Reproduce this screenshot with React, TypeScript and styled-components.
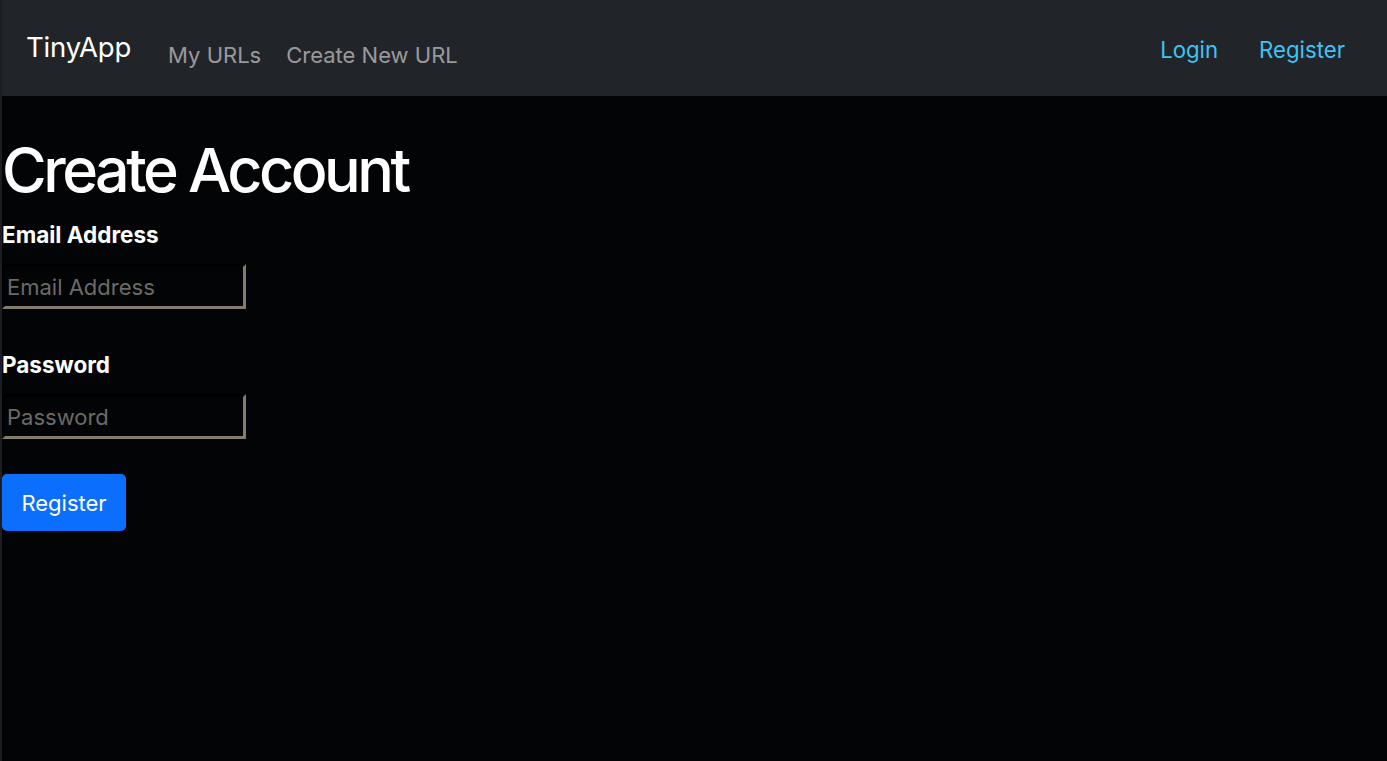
import React from "react";
import styled, { createGlobalStyle } from "styled-components";

const Global = createGlobalStyle`
  html, body { margin: 0; padding: 0; background: #030406; }
  body { font-family: Inter, "Noto Sans", sans-serif; color: #fff; }
  * { box-sizing: border-box; }
`;

const Page = styled.div`
  min-height: 761px;
  border-left: 2px solid #1c1e22;
  background: #030406;
`;

const Nav = styled.nav`
  height: 96px;
  background: #212529;
  display: flex;
  align-items: center;
  padding: 0 42px 0 24px;
`;

const Brand = styled.a`
  font-size: 27.5px;
  color: #fff;
  text-decoration: none;
  margin-right: 37px;
  margin-top: -2px;
  letter-spacing: -0.2px;
`;

const NavLinks = styled.div`
  display: flex;
  gap: 25px;
  margin-top: 14px;
`;

const NavLink = styled.a`
  font-size: 22px;
  color: rgba(255, 255, 255, 0.55);
  text-decoration: none;
`;

const Right = styled.div`
  margin-left: auto;
  display: flex;
  gap: 41px;
  margin-top: 2px;
`;

const AuthLink = styled.a`
  font-size: 22.2px;
  color: #3ec3f5;
  text-decoration: none;
`;

const Main = styled.main`
  padding: 38px 0 0 0;
`;

const Title = styled.h1`
  margin: 0 0 14px 0;
  font-size: 61px;
  font-weight: 500;
  line-height: 1.2;
  letter-spacing: -3.5px;
`;

const Form = styled.form`
  display: flex;
  flex-direction: column;
  align-items: flex-start;
`;

const Group = styled.div`
  display: flex;
  flex-direction: column;
  align-items: flex-start;
  margin-bottom: 42px;
`;

const Label = styled.label`
  font-size: 22.5px;
  font-weight: 700;
  margin-bottom: 16px;
`;

const Input = styled.input`
  width: 244px;
  height: 45px;
  background: #030406;
  border: 3px inset #857b6c;
  border-top-color: #3e3a34;
  border-left-color: #3e3a34;
  color: #fff;
  font-family: Inter, "Noto Sans", sans-serif;
  font-size: 22px;
  padding: 0 2px;
  outline: none;
  &::placeholder { color: #6d6a66; }
`;

const Button = styled.button`
  margin-top: -7px;
  width: 124px;
  height: 57px;
  background: #0b6efd;
  border: none;
  border-radius: 5px;
  color: #fff;
  font-family: Inter, "Noto Sans", sans-serif;
  font-size: 22px;
`;

export default function App() {
  return (
    <>
      <Global />
      <Page>
        <Nav>
          <Brand href="#">TinyApp</Brand>
          <NavLinks>
            <NavLink href="#">My URLs</NavLink>
            <NavLink href="#">Create New URL</NavLink>
          </NavLinks>
          <Right>
            <AuthLink href="#">Login</AuthLink>
            <AuthLink href="#">Register</AuthLink>
          </Right>
        </Nav>
        <Main>
          <Title>Create Account</Title>
          <Form onSubmit={(e) => e.preventDefault()}>
            <Group>
              <Label>Email Address</Label>
              <Input type="email" placeholder="Email Address" />
            </Group>
            <Group>
              <Label>Password</Label>
              <Input type="password" placeholder="Password" />
            </Group>
            <Button type="submit">Register</Button>
          </Form>
        </Main>
      </Page>
    </>
  );
}
